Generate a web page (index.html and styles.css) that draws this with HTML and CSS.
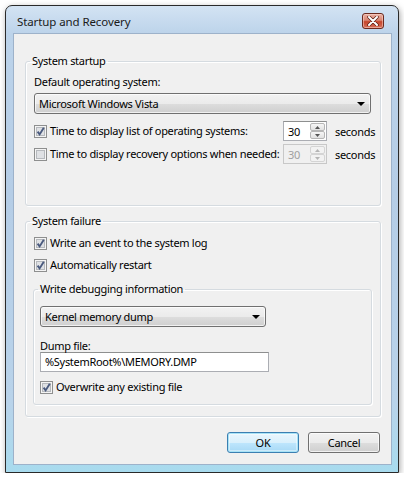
FILE: index.html
```html
<!DOCTYPE html>
<html>
<head>
<meta charset="utf-8">
<link rel="stylesheet" href="styles.css">
</head>
<body>
<div class="window">
  <div class="titlebar">
    <span class="title">Startup and Recovery</span>
    <button class="close" aria-label="Close">
      <svg width="12" height="10" viewBox="0 0 12 10"><path d="M2 1 L10 9 M10 1 L2 9" stroke="#5a1d12" stroke-width="3.4" stroke-linecap="round"/><path d="M2 1 L10 9 M10 1 L2 9" stroke="#fff" stroke-width="2" stroke-linecap="round"/></svg>
    </button>
  </div>
  <div class="client">
    <fieldset class="group g1">
      <legend>System startup</legend>
      <div class="lbl">Default operating system:</div>
      <div class="combo combo-os"><span>Microsoft Windows Vista</span><svg class="arrow" width="8" height="4" viewBox="0 0 8 4"><path d="M0 0 H8 L4 4 Z" fill="#000"/></svg></div>
      <div class="timerow first">
        <label class="check"><svg class="cb" width="13" height="13" viewBox="0 0 13 13"><rect x="0.5" y="0.5" width="12" height="12" fill="#f4f4f4" stroke="#8e8f8f"/><rect x="2.5" y="2.5" width="8" height="8" fill="#dfe1e4" stroke="#b6b9bd"/><path d="M3.6 6.6 L5.6 9.4 L9.8 2.8" stroke="#4a5a7e" stroke-width="1.9" fill="none"/></svg><span>Time to display list of operating systems:</span></label>
        <div class="spin"><span class="val">30</span><div class="arrows"><span class="sb"><svg width="5" height="3" viewBox="0 0 5 3"><path d="M0 3 L2.5 0 L5 3 Z" fill="#555"/></svg></span><span class="sb"><svg width="5" height="3" viewBox="0 0 5 3"><path d="M0 0 L2.5 3 L5 0 Z" fill="#555"/></svg></span></div></div>
        <span class="unit">seconds</span>
      </div>
      <div class="timerow">
        <label class="check"><svg class="cb" width="13" height="13" viewBox="0 0 13 13"><rect x="0.5" y="0.5" width="12" height="12" fill="#f4f4f4" stroke="#8e8f8f"/><rect x="2.5" y="2.5" width="8" height="8" fill="#dfe1e4" stroke="#b6b9bd"/></svg><span>Time to display recovery options when needed:</span></label>
        <div class="spin disabled"><span class="val">30</span><div class="arrows"><span class="sb"><svg width="5" height="3" viewBox="0 0 5 3"><path d="M0 3 L2.5 0 L5 3 Z" fill="#b4b4b4"/></svg></span><span class="sb"><svg width="5" height="3" viewBox="0 0 5 3"><path d="M0 0 L2.5 3 L5 0 Z" fill="#b4b4b4"/></svg></span></div></div>
        <span class="unit">seconds</span>
      </div>
    </fieldset>

    <fieldset class="group g2">
      <legend>System failure</legend>
      <label class="check row"><svg class="cb" width="13" height="13" viewBox="0 0 13 13"><rect x="0.5" y="0.5" width="12" height="12" fill="#f4f4f4" stroke="#8e8f8f"/><rect x="2.5" y="2.5" width="8" height="8" fill="#dfe1e4" stroke="#b6b9bd"/><path d="M3.6 6.6 L5.6 9.4 L9.8 2.8" stroke="#4a5a7e" stroke-width="1.9" fill="none"/></svg><span>Write an event to the system log</span></label>
      <label class="check row second"><svg class="cb" width="13" height="13" viewBox="0 0 13 13"><rect x="0.5" y="0.5" width="12" height="12" fill="#f4f4f4" stroke="#8e8f8f"/><rect x="2.5" y="2.5" width="8" height="8" fill="#dfe1e4" stroke="#b6b9bd"/><path d="M3.6 6.6 L5.6 9.4 L9.8 2.8" stroke="#4a5a7e" stroke-width="1.9" fill="none"/></svg><span>Automatically restart</span></label>

      <fieldset class="group g3">
        <legend>Write debugging information</legend>
        <div class="combo combo-dump"><span>Kernel memory dump</span><svg class="arrow" width="8" height="4" viewBox="0 0 8 4"><path d="M0 0 H8 L4 4 Z" fill="#000"/></svg></div>
        <div class="lbl dumplbl">Dump file:</div>
        <div class="edit">%SystemRoot%\MEMORY.DMP</div>
        <label class="check row over"><svg class="cb" width="13" height="13" viewBox="0 0 13 13"><rect x="0.5" y="0.5" width="12" height="12" fill="#f4f4f4" stroke="#8e8f8f"/><rect x="2.5" y="2.5" width="8" height="8" fill="#dfe1e4" stroke="#b6b9bd"/><path d="M3.6 6.6 L5.6 9.4 L9.8 2.8" stroke="#4a5a7e" stroke-width="1.9" fill="none"/></svg><span>Overwrite any existing file</span></label>
      </fieldset>
    </fieldset>

    <div class="buttons">
      <button class="btn default">OK</button>
      <button class="btn">Cancel</button>
    </div>
  </div>
</div>
</body>
</html>
```
FILE: styles.css
```css
html, body {
  margin: 0;
  padding: 0;
  background: #ffffff;
}
body {
  font-family: "Noto Sans", "Open Sans", sans-serif;
  font-size: 11px;
  letter-spacing: -0.3px;
  color: #000;
}
.window {
  margin: 5px 0 0 5px;
  width: 394px;
  height: 468px;
  box-sizing: border-box;
  border: 1px solid #2a2a2a;
  border-radius: 7px 7px 0 0;
  background: linear-gradient(180deg, #d3e3f3 0%, #bcd3ea 6%, #b5cde6 40%, #b9d3ea 85%, #a8dbee 100%);
  box-shadow: 1px 2px 6px rgba(0,0,0,0.35);
  display: flex;
  flex-direction: column;
  padding: 0 6px 7px 7px;
}
.titlebar {
  height: 27px;
  display: flex;
  align-items: flex-start;
  justify-content: space-between;
  flex: none;
}
.title {
  margin: 8px 0 0 4px;
  line-height: 16px;
  font-size: 11.5px;
  letter-spacing: -0.1px;
  color: #1a1a1a;
}
.close {
  margin: 7px 8px 0 0;
  width: 22px;
  height: 16px;
  padding: 0;
  border: 1px solid #6b2a1f;
  border-radius: 3px;
  background: linear-gradient(180deg, #eab1a4 0%, #d98572 45%, #c5452c 55%, #d6705a 100%);
  box-shadow: inset 0 0 0 1px rgba(255,220,210,0.5);
  display: flex;
  align-items: center;
  justify-content: center;
}
.client {
  flex: 1;
  border: 1px solid #9db2ca;
  background: #f0f0f0;
  padding: 19px 10px 0 11px;
  display: flex;
  flex-direction: column;
}
.group {
  margin: 0;
  border: 1px solid #d5dbe0;
  border-radius: 3px;
  padding: 5px 9px 41px 8px;
  min-width: 0;
  box-shadow: inset 1px 1px 0 #ffffff, 1px 1px 0 #ffffff;
}
.group legend {
  padding: 0 2px;
  margin-left: -4px;
  line-height: 16px;
}
.lbl {
  line-height: 16px;
}
.combo {
  box-sizing: border-box;
  height: 21px;
  border: 1px solid #707070;
  border-radius: 3px;
  background: linear-gradient(180deg, #f2f2f2 0%, #ebebeb 50%, #dddddd 51%, #cfcfcf 100%);
  box-shadow: inset 0 0 0 1px rgba(255,255,255,0.7);
  display: flex;
  align-items: center;
  justify-content: space-between;
  padding: 0 5px 0 4px;
}
.combo-os {
  margin-top: 3px;
}
.combo .arrow {
  flex: none;
}
.timerow {
  display: flex;
  align-items: center;
  height: 20px;
  margin-top: 3px;
}
.timerow.first {
  margin-top: 7px;
}
.check {
  display: flex;
  align-items: center;
  line-height: 16px;
}
.check .cb {
  flex: none;
  margin-right: 3px;
}
.timerow .check {
  width: 249px;
  flex: none;
  white-space: nowrap;
}
.spin {
  box-sizing: border-box;
  width: 44px;
  height: 20px;
  border: 1px solid #abadb3;
  border-top-color: #8e8f8f;
  background: #fff;
  display: flex;
  align-items: center;
  justify-content: space-between;
  padding: 0 1px 0 4px;
  flex: none;
}
.spin.disabled {
  background: #f0f0f0;
  border-color: #c8c8c8;
  color: #a0a0a0;
}
.arrows {
  display: flex;
  flex-direction: column;
  gap: 0;
  height: 16px;
  width: 15px;
}
.sb {
  flex: 1;
  box-sizing: border-box;
  border: 1px solid #b6b6b6;
  border-radius: 2px;
  background: linear-gradient(180deg, #f6f6f6, #e2e2e2);
  display: flex;
  align-items: center;
  justify-content: center;
}
.spin.disabled .sb {
  border-color: #d4d4d4;
  background: #f2f2f2;
}
.unit {
  margin-left: 8px;
}
.g2 {
  margin-top: 7px;
  padding: 6px 9px 11px 8px;
}
.row.second {
  margin-top: 6px;
}
.g3 {
  margin: 8px -1px 0 -1px;
  padding: 9px 6px 9px 6px;
}
.g3 legend {
  margin-left: -2px;
}
.combo-dump {
  width: 226px;
}
.dumplbl {
  margin-top: 13px;
  line-height: 12px;
}
.edit {
  box-sizing: border-box;
  width: 229px;
  height: 20px;
  border: 1px solid #abadb3;
  border-top-color: #8e8f8f;
  background: #fff;
  line-height: 18px;
  padding-left: 4px;
}
.row.over {
  margin-top: 7px;
}
.buttons {
  display: flex;
  justify-content: flex-end;
  gap: 9px;
  margin: 15px 1px 0 0;
}
.btn {
  box-sizing: border-box;
  width: 72px;
  height: 21px;
  font: inherit;
  letter-spacing: inherit;
  color: #000;
  padding: 0;
  border: 1px solid #707070;
  border-radius: 3px;
  background: linear-gradient(180deg, #f2f2f2 0%, #ebebeb 50%, #dddddd 51%, #cfcfcf 100%);
  box-shadow: inset 0 0 0 1px rgba(255,255,255,0.7);
}
.btn.default {
  border-color: #3c7fb1;
  box-shadow: inset 0 0 0 1px #a8e3f7, inset 0 0 0 2px rgba(255,255,255,0.4);
  background: linear-gradient(180deg, #eaf6fd 0%, #d9f0fc 50%, #bee6fd 51%, #a7d9f5 100%);
}
```
